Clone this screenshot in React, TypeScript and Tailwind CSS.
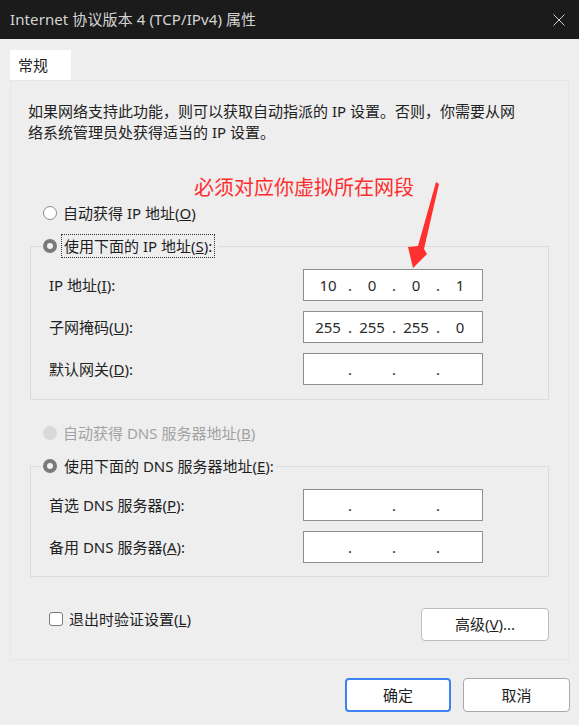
import React from 'react';

type RadioState = 'off' | 'on' | 'disabled';

const Radio: React.FC<{ state: RadioState }> = ({ state }) => {
  if (state === 'on') {
    return (
      <span className="w-[14px] h-[14px] rounded-full bg-[#7a7a7a] grid place-items-center shrink-0">
        <span className="w-[6px] h-[6px] rounded-full bg-[#f2f2f2]" />
      </span>
    );
  }
  if (state === 'disabled') {
    return <span className="w-[14px] h-[14px] rounded-full bg-[#d9d9d9] shrink-0" />;
  }
  return <span className="w-[14px] h-[14px] rounded-full bg-white border border-[#8a8a8a] shrink-0" />;
};

// IP 输入框：四段 + 三个点
const IpBox: React.FC<{ parts?: string[] }> = ({ parts = ['', '', '', ''] }) => (
  <div className="w-[180px] h-[32px] bg-white border border-[#8e8e8e] flex items-center pl-[7px] text-[15px] text-[#2b2b2b]">
    {parts.map((p, i) => (
      <React.Fragment key={i}>
        <span className="w-[34px] text-center">{p}</span>
        {i < 3 && <span className="w-[10px] text-center">.</span>}
      </React.Fragment>
    ))}
  </div>
);

const Row: React.FC<{ label: React.ReactNode; parts?: string[] }> = ({ label, parts }) => (
  <div className="grid grid-cols-[254px_180px] items-center">
    <span className="text-[15px] text-[#222]">{label}</span>
    <IpBox parts={parts} />
  </div>
);

export default function App() {
  return (
    <div className="w-[579px] h-[725px] bg-[#eeeeee] flex flex-col font-['Noto_Sans','Noto_Sans_CJK_SC',sans-serif] leading-[21px] text-[#1e1e1e] relative overflow-hidden">
      {/* Title bar */}
      <div className="h-[39px] bg-[#1b1b1b] flex items-center justify-between pl-[10px] pr-[14px] shrink-0">
        <span className="text-[15px] text-[#d4d4d4] tracking-[0.1px]">Internet 协议版本 4 (TCP/IPv4) 属性</span>
        <svg width="12" height="12" viewBox="0 0 12 12" className="stroke-[#cfcfcf]">
          <path d="M0.5 0.5 L11.5 11.5 M11.5 0.5 L0.5 11.5" strokeWidth="1" />
        </svg>
      </div>

      {/* Tab */}
      <div className="mt-[11px] ml-[10px] w-[61px] h-[30px] bg-white flex items-center pl-[8px] text-[15px] shrink-0">
        常规
      </div>

      {/* Tab page */}
      <div className="mx-[10px] h-[580px] border border-[#e7e7e7] flex flex-col shrink-0">
        <div className="mt-[20px] ml-[17px] text-[15px] text-[#222] whitespace-nowrap">
          <div>如果网络支持此功能，则可以获取自动指派的 IP 设置。否则，你需要从网</div>
          <div>络系统管理员处获得适当的 IP 设置。</div>
        </div>

        <div className="mt-[59px] ml-[32px] h-[22px] flex items-center gap-[6px] text-[15px]">
          <Radio state="off" />
          <span>自动获得 IP 地址(<u>O</u>)</span>
        </div>

        <fieldset className="mt-[10px] ml-[19px] w-[519px] border border-[#dcdcdc]">
          <legend className="ml-[12px] flex items-center gap-[4px] text-[15px] pr-[3px]">
            <Radio state="on" />
            <span className="border border-dotted border-[#333] px-[2px] h-[24px] flex items-center">
              使用下面的 IP 地址(<u>S</u>):
            </span>
          </legend>
          <div className="pt-[11px] pb-[14px] pl-[18px] flex flex-col gap-[10px]">
            <Row label={<>IP 地址(<u>I</u>):</>} parts={['10', '0', '0', '1']} />
            <Row label={<>子网掩码(<u>U</u>):</>} parts={['255', '255', '255', '0']} />
            <Row label={<>默认网关(<u>D</u>):</>} />
          </div>
        </fieldset>

        <div className="mt-[22px] ml-[32px] h-[22px] flex items-center gap-[6px] text-[15px] text-[#a3a3a3]">
          <Radio state="disabled" />
          <span>自动获得 DNS 服务器地址(<u>B</u>)</span>
        </div>

        <fieldset className="mt-[10px] ml-[19px] w-[519px] border border-[#dcdcdc]">
          <legend className="ml-[12px] flex items-center gap-[7px] text-[15px] pr-[3px] h-[24px]">
            <Radio state="on" />
            <span>使用下面的 DNS 服务器地址(<u>E</u>):</span>
          </legend>
          <div className="pt-[11px] pb-[13px] pl-[18px] flex flex-col gap-[10px]">
            <Row label={<>首选 DNS 服务器(<u>P</u>):</>} />
            <Row label={<>备用 DNS 服务器(<u>A</u>):</>} />
          </div>
        </fieldset>

        <div className="mt-[31px] flex items-start justify-between pl-[38px] pr-[19px]">
          <div className="h-[22px] flex items-center gap-[6px] text-[15px]">
            <span className="w-[14px] h-[14px] rounded-[3px] border border-[#7a7a7a] bg-white" />
            <span>退出时验证设置(<u>L</u>)</span>
          </div>
          <button className="w-[128px] h-[33px] bg-white border border-[#bdbdbd] rounded-[4px] text-[15px]">
            高级(<u>V</u>)...
          </button>
        </div>
      </div>

      {/* Dialog buttons */}
      <div className="mt-[18px] flex justify-end gap-[12px] pr-[9px]">
        <button className="w-[106px] h-[34px] bg-white border-2 border-[#3f80f2] rounded-[4px] text-[15px]">
          确定
        </button>
        <button className="w-[107px] h-[34px] bg-white border border-[#a8a8a8] rounded-[4px] text-[15px]">
          取消
        </button>
      </div>

      {/* Red annotation */}
      <div className="absolute left-[194px] top-[175px] text-[20px] leading-[24px] text-[#ff2d2d] font-['Noto_Sans_CJK_SC',sans-serif]">
        必须对应你虚拟所在网段
      </div>
      <svg className="absolute left-0 top-0 pointer-events-none" width="579" height="725">
        <polygon points="436,182 439,184 424,249 427,254 413,268 408,247 418,246" fill="#ff3030" />
      </svg>
    </div>
  );
}
